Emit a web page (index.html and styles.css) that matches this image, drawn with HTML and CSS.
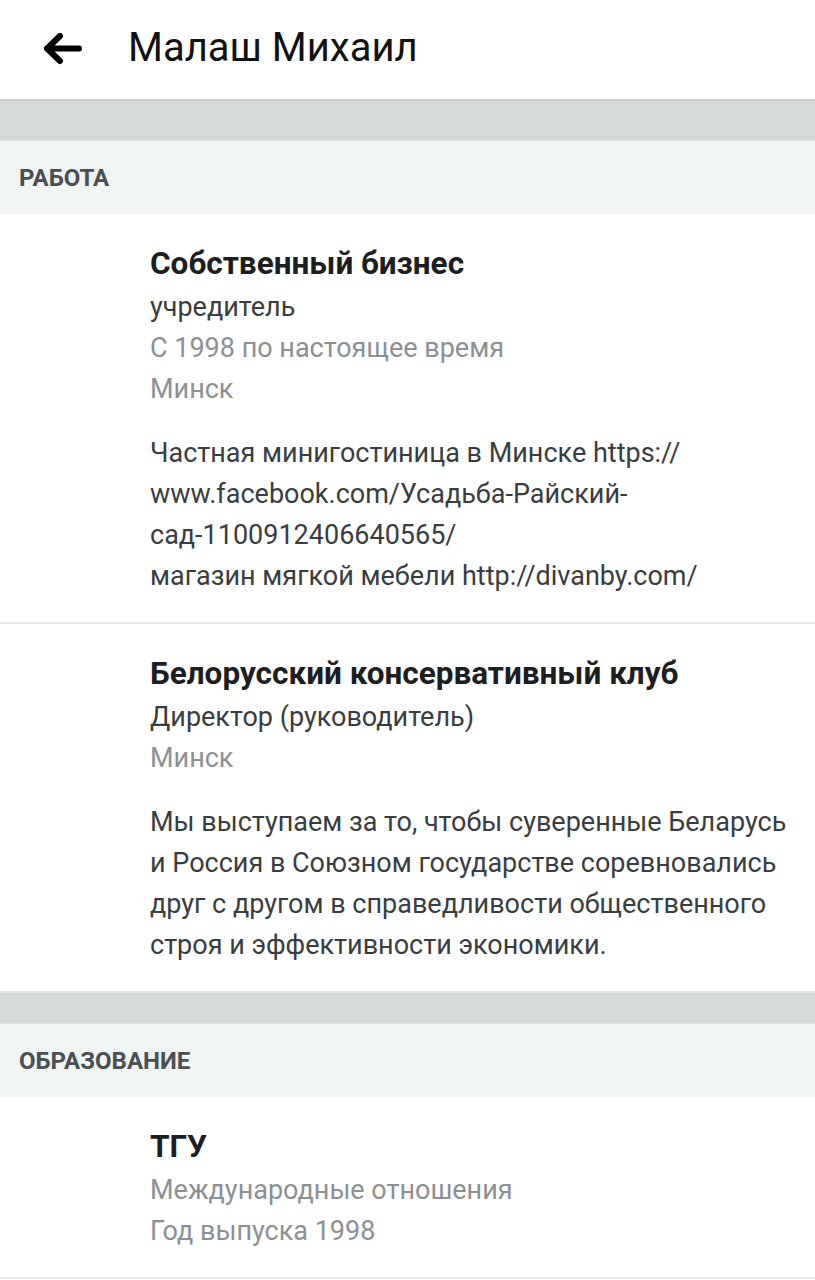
FILE: index.html
```html
<!DOCTYPE html>
<html lang="ru">
<head>
  <meta charset="UTF-8">
  <meta name="viewport" content="width=device-width, initial-scale=1.0">
  <title>Малаш Михаил</title>
  <link rel="stylesheet" href="styles.css">
</head>
<body>

  <div class="top-bar">
    <button class="back-button" aria-label="Назад">
      <svg width="40" height="34" viewBox="0 0 40 34">
        <path d="M4 15.5 H36 M17 3 L4 15.5 L17 28" fill="none" stroke="#000" stroke-width="6" stroke-linecap="round" stroke-linejoin="round"/>
      </svg>
    </button>
    <h1 class="top-title">Малаш Михаил</h1>
  </div>

  <div class="spacer"></div>

  <div class="section-header">Работа</div>

  <div class="entry">
    <div class="entry-title">Собственный бизнес</div>
    <div class="entry-line">учредитель</div>
    <div class="entry-line muted">С 1998 по настоящее время</div>
    <div class="entry-line muted">Минск</div>
    <div class="entry-text">Частная минигостиница в Минске https://<wbr>www.facebook.com/Усадьба-Райский-сад-1100912406640565/<br>магазин мягкой мебели http://divanby.com/</div>
  </div>

  <div class="entry">
    <div class="entry-title">Белорусский консервативный клуб</div>
    <div class="entry-line">Директор (руководитель)</div>
    <div class="entry-line muted">Минск</div>
    <div class="entry-text">Мы выступаем за то, чтобы суверенные Беларусь и Россия в Союзном государстве соревновались друг с другом в справедливости общественного строя и эффективности экономики.</div>
  </div>

  <div class="spacer short"></div>

  <div class="section-header">Образование</div>

  <div class="entry">
    <div class="entry-title">ТГУ</div>
    <div class="entry-line muted">Международные отношения</div>
    <div class="entry-line muted">Год выпуска 1998</div>
  </div>

</body>
</html>
```

FILE: styles.css
```css
body {
  margin: 0;
  background-color: #ffffff;
  font-family: Roboto, "Noto Sans", Arial, sans-serif;
  color: #3a3d40;
}

.top-bar {
  display: flex;
  align-items: center;
  height: 101px;
  border-bottom: 2px solid #c9cdcf;
  box-sizing: border-box;
}

.back-button {
  display: flex;
  align-items: center;
  justify-content: center;
  width: 40px;
  height: 34px;
  margin-left: 43px;
  margin-right: 45px;
  padding: 0;
  border: none;
  background: none;
}

.top-title {
  margin: 0 0 4px;
  font-size: 40px;
  font-weight: 400;
  color: #111111;
}

.spacer {
  height: 39px;
  background-color: #d5dadb;
  border-bottom: 1px solid #e2e6e6;
}

.spacer.short {
  height: 30px;
}

.section-header {
  height: 73px;
  display: flex;
  align-items: center;
  padding-left: 19px;
  background-color: #f0f4f3;
  font-size: 24px;
  font-weight: 700;
  text-transform: uppercase;
  color: #4b4f52;
}

.entry {
  padding: 27px 20px 25px 150px;
  border-bottom: 2px solid #e4e6e7;
}

.entry-title {
  font-size: 31.5px;
  font-weight: 700;
  line-height: 46px;
  color: #1c1e21;
}

.entry-line {
  font-size: 27px;
  line-height: 41px;
}

.muted {
  color: #8c9093;
}

.entry-text {
  margin-top: 23px;
  font-size: 27px;
  line-height: 41px;
}
```
